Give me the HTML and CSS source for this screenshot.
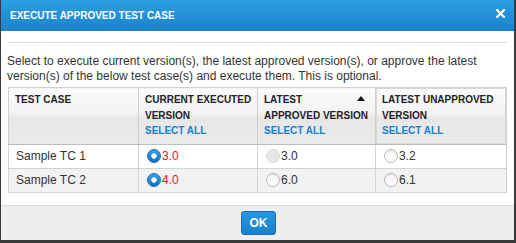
FILE: index.html
```html
<!DOCTYPE html>
<html>
<head>
<meta charset="utf-8">
<link rel="stylesheet" href="styles.css">
</head>
<body>
<div class="dialog">
  <div class="titlebar">
    <span class="title">EXECUTE APPROVED TEST CASE</span>
    <svg class="close" width="9" height="9" viewBox="0 0 9 9"><path d="M1 1L8 8M8 1L1 8" stroke="#fff" stroke-width="2.2" stroke-linecap="square"/></svg>
  </div>
  <div class="content">
    <div class="divider"></div>
    <p class="intro">Select to execute current version(s), the latest approved version(s), or approve the latest version(s) of the below test case(s) and execute them. This is optional.</p>
    <table class="grid">
      <colgroup>
        <col class="c1"><col class="c2"><col class="c3"><col class="c4">
      </colgroup>
      <thead>
        <tr>
          <th>TEST CASE</th>
          <th>CURRENT EXECUTED<br>VERSION<br><span class="sel">SELECT ALL</span></th>
          <th><div class="sortline"><span>LATEST</span><span class="arrow"></span></div>APPROVED VERSION<br><span class="sel">SELECT ALL</span></th>
          <th class="hover">LATEST UNAPPROVED<br>VERSION<br><span class="sel">SELECT ALL</span></th>
        </tr>
      </thead>
      <tbody>
        <tr>
          <td>Sample TC 1</td>
          <td><span class="radio on"></span><span class="red">3.0</span></td>
          <td><span class="radio dis"></span>3.0</td>
          <td><span class="radio"></span>3.2</td>
        </tr>
        <tr class="alt">
          <td>Sample TC 2</td>
          <td><span class="radio on"></span><span class="red">4.0</span></td>
          <td><span class="radio"></span>6.0</td>
          <td><span class="radio"></span>6.1</td>
        </tr>
      </tbody>
    </table>
  </div>
  <div class="footer">
    <button class="ok">OK</button>
  </div>
</div>
</body>
</html>
```
FILE: styles.css
```css
html, body {
  margin: 0;
  padding: 0;
  background: #fff;
}
body {
  font-family: "Liberation Sans", Arial, sans-serif;
}
.dialog {
  width: 516px;
  height: 243px;
  box-sizing: border-box;
  border-left: 1px solid #3a3a3a;
  border-right: 2px solid #3a3a3a;
  border-bottom: 3px solid #3a3a3a;
  display: flex;
  flex-direction: column;
  background: #fff;
}
.titlebar {
  height: 31px;
  flex: none;
  background: linear-gradient(#2c9ee2, #1c82cc);
  display: flex;
  align-items: center;
  justify-content: space-between;
  padding: 0 9px 1px 9px;
  box-sizing: border-box;
}
.title {
  color: #fff;
  font-weight: bold;
  font-size: 10px;
}
.close {
  display: block;
  margin-bottom: 4px;
}
.content {
  padding: 0 7px 0 6px;
  flex: 1;
}
.divider {
  border-top: 1px solid #dadada;
  margin-top: 11px;
}
.intro {
  margin: 11px 0 3px 0;
  font-size: 12px;
  line-height: 15px;
  color: #333;
}
.grid {
  border-collapse: collapse;
  table-layout: fixed;
  width: 498px;
  margin: 0 1px;
}
.c1 { width: 130px; }
.c2 { width: 119px; }
.c3 { width: 118px; }
.c4 { width: 131px; }
.grid th {
  text-align: left;
  vertical-align: top;
  font-size: 10px;
  font-weight: bold;
  line-height: 15.5px;
  color: #222;
  white-space: nowrap;
  padding: 4px 2px 5px 6px;
  border: 1px solid #cfcfcf;
  border-bottom-color: #bdbdbd;
  background: linear-gradient(#fbfbfb 0%, #f3f3f3 45%, #e7e7e7 52%, #eaeaea 100%);
}
.grid th.hover {
  box-shadow: inset 0 0 0 1px #d8d8d8;
}
.sortline {
  display: flex;
  justify-content: space-between;
  align-items: center;
  padding-right: 8px;
}
.arrow {
  width: 0;
  height: 0;
  border-left: 4px solid transparent;
  border-right: 4px solid transparent;
  border-bottom: 5px solid #111;
  margin-top: -2px;
}
.sel {
  color: #1b7fcc;
}
.grid td {
  height: 23px;
  font-size: 12px;
  color: #333;
  padding: 0 7px 0 8px;
  border: 1px solid #d3d3d3;
  background: #fff;
  vertical-align: middle;
}
.grid td:first-child {
  padding-left: 7px;
}
.grid tr.alt td {
  background: #f2f2f2;
}
.radio {
  display: inline-block;
  width: 12px;
  height: 12px;
  border-radius: 50%;
  border: 1px solid #b9b9b9;
  background: linear-gradient(#f4f4f4, #fff);
  box-shadow: inset 0 1px 1px rgba(0,0,0,0.08);
  vertical-align: -3px;
  margin-right: 1px;
}
.radio.dis {
  border-color: #dcdcdc;
  background: #e5e5e5;
  box-shadow: none;
}
.radio.on {
  border-color: #1a76c0;
  background: radial-gradient(circle, #fff 0, #fff 2.4px, transparent 3px), linear-gradient(#3aa2ea, #1570bb);
  box-shadow: none;
}
.red {
  color: #e8141b;
}
.footer {
  flex: none;
  height: 35px;
  box-sizing: border-box;
  background: #eeeeee;
  border-top: 1px solid #dcdcdc;
  display: flex;
  justify-content: center;
  align-items: flex-start;
  padding-top: 5px;
}
.ok {
  width: 35px;
  height: 24px;
  border: 1px solid #1670b5;
  border-radius: 3px;
  background: linear-gradient(#2a98e0, #1a7fca);
  color: #fff;
  font-family: "Liberation Sans", Arial, sans-serif;
  font-weight: bold;
  font-size: 12px;
  padding: 0;
  margin-left: 2px;
}
```
